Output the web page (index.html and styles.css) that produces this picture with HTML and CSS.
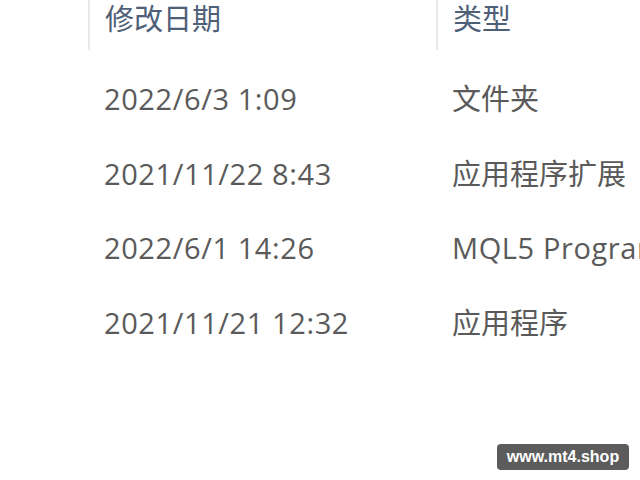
FILE: index.html
```html
<!DOCTYPE html>
<html lang="zh">
<head>
<meta charset="utf-8">
<link rel="stylesheet" href="styles.css">
</head>
<body>
<div class="view">
  <div class="header">
    <div class="hcell c1">修改日期</div>
    <div class="hcell c2">类型</div>
  </div>
  <div class="rows">
    <div class="row"><div class="cell c1">2022/6/3 1:09</div><div class="cell c2">文件夹</div></div>
    <div class="row"><div class="cell c1">2021/11/22 8:43</div><div class="cell c2">应用程序扩展</div></div>
    <div class="row"><div class="cell c1">2022/6/1 14:26</div><div class="cell c2 latin">MQL5 Program</div></div>
    <div class="row"><div class="cell c1">2021/11/21 12:32</div><div class="cell c2">应用程序</div></div>
  </div>
  <div class="badge">www.mt4.shop</div>
</div>
</body>
</html>
```
FILE: styles.css
```css
html, body {
  margin: 0;
  padding: 0;
  background: #ffffff;
}
.view {
  position: relative;
  width: 640px;
  height: 480px;
  overflow: hidden;
  font-family: "Open Sans", "Noto Sans CJK SC", sans-serif;
  font-size: 29px;
  color: #5a5a5a;
}
.header {
  display: flex;
  height: 50px;
  padding-left: 88px;
}
.hcell {
  border-left: 2px solid #e8e8e8;
  padding-left: 15px;
  padding-top: 1px;
  height: 50px;
  line-height: 36px;
  color: #4e6077;
  box-sizing: border-box;
}
.header .c1 { width: 348px; }
.header .c2 { flex: 1; }
.rows {
  padding-top: 24px;
  padding-left: 104px;
}
.row {
  display: flex;
  height: 74.5px;
  line-height: 50px;
  white-space: nowrap;
}
.cell.c1 { width: 348px; flex: none; letter-spacing: 0.6px; }
.cell.c2 { flex: none; }
.cell.latin { letter-spacing: 0.6px; }
.badge {
  position: absolute;
  left: 497px;
  top: 444px;
  width: 132px;
  height: 26px;
  background: #5c5c5c;
  border-radius: 4px;
  color: #ffffff;
  font-family: "Liberation Sans", Arial, sans-serif;
  font-weight: bold;
  font-size: 16px;
  line-height: 26px;
  text-align: center;
}
```
